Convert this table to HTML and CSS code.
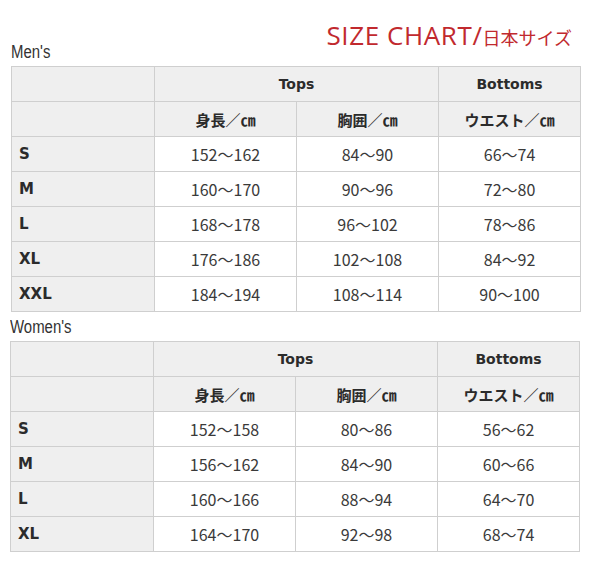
FILE: index.html
```html
<!DOCTYPE html>
<html lang="ja">
<head>
<meta charset="utf-8">
<title>SIZE CHART</title>
<link rel="stylesheet" href="styles.css">
</head>
<body>
<div class="page">
  <h1 class="title">SIZE CHART/<span class="title-jp">日本サイズ</span></h1>

  <h2 class="label">Men's</h2>
  <table class="chart">
    <colgroup><col class="c1"><col class="c2"><col class="c3"><col class="c4"></colgroup>
    <tr class="head"><th></th><th colspan="2">Tops</th><th>Bottoms</th></tr>
    <tr class="head sub"><th></th><th>身長／㎝</th><th>胸囲／㎝</th><th>ウエスト／㎝</th></tr>
    <tr><th class="size">S</th><td>152～162</td><td>84～90</td><td>66～74</td></tr>
    <tr><th class="size">M</th><td>160～170</td><td>90～96</td><td>72～80</td></tr>
    <tr><th class="size">L</th><td>168～178</td><td>96～102</td><td>78～86</td></tr>
    <tr><th class="size">XL</th><td>176～186</td><td>102～108</td><td>84～92</td></tr>
    <tr><th class="size">XXL</th><td>184～194</td><td>108～114</td><td>90～100</td></tr>
  </table>

  <h2 class="label label-women">Women's</h2>
  <table class="chart chart-women">
    <colgroup><col class="c1"><col class="c2"><col class="c3"><col class="c4"></colgroup>
    <tr class="head"><th></th><th colspan="2">Tops</th><th>Bottoms</th></tr>
    <tr class="head sub"><th></th><th>身長／㎝</th><th>胸囲／㎝</th><th>ウエスト／㎝</th></tr>
    <tr><th class="size">S</th><td>152～158</td><td>80～86</td><td>56～62</td></tr>
    <tr><th class="size">M</th><td>156～162</td><td>84～90</td><td>60～66</td></tr>
    <tr><th class="size">L</th><td>160～166</td><td>88～94</td><td>64～70</td></tr>
    <tr><th class="size">XL</th><td>164～170</td><td>92～98</td><td>68～74</td></tr>
  </table>
</div>
</body>
</html>
```

FILE: styles.css
```css
* { box-sizing: border-box; }
html, body { margin: 0; padding: 0; background: #fff; }
.page {
  width: 600px;
  padding: 20px 0 0 11px;
  color: #333;
}
.title {
  margin: 0;
  height: 24px;
  padding-right: 28px;
  text-align: right;
  font-family: "Open Sans", "Noto Sans CJK JP", sans-serif;
  font-weight: 400;
  font-size: 26px;
  line-height: 30px;
  letter-spacing: 0.6px;
  color: #c1292e;
}
.title-jp {
  font-family: "Noto Sans CJK JP", sans-serif;
  font-size: 18px;
  letter-spacing: 0;
}
.label {
  margin: 0;
  height: 22px;
  font-family: "Liberation Sans", sans-serif;
  font-weight: 400;
  font-size: 18px;
  line-height: 16px;
  color: #333;
  transform: scaleX(0.83);
  transform-origin: left top;
}
.label-women {
  margin: 7px 0 0 -1px;
  height: 22px;
}
.chart {
  border-collapse: collapse;
  table-layout: fixed;
  width: 570px;
}
.chart-women { margin-left: -1px; }
.c1 { width: 143px; }
.c2, .c3, .c4 { width: 142px; }
.chart th, .chart td {
  border: 1px solid #cfcfcf;
  height: 35px;
  padding: 0;
  text-align: center;
  vertical-align: middle;
}
.chart td {
  background: #fff;
  font-family: "Noto Sans CJK JP", sans-serif;
  font-size: 16px;
  font-weight: 400;
  color: #3a3a3a;
}
.chart th {
  background: #efefef;
  font-family: "DejaVu Sans", "Noto Sans CJK JP", sans-serif;
  font-weight: 700;
  font-size: 14px;
  color: #2b2b2b;
}
.chart .sub th {
  font-family: "Noto Sans CJK JP", sans-serif;
  font-size: 15px;
}
.chart th.size {
  text-align: left;
  padding-left: 7px;
  font-size: 15px;
}
```
